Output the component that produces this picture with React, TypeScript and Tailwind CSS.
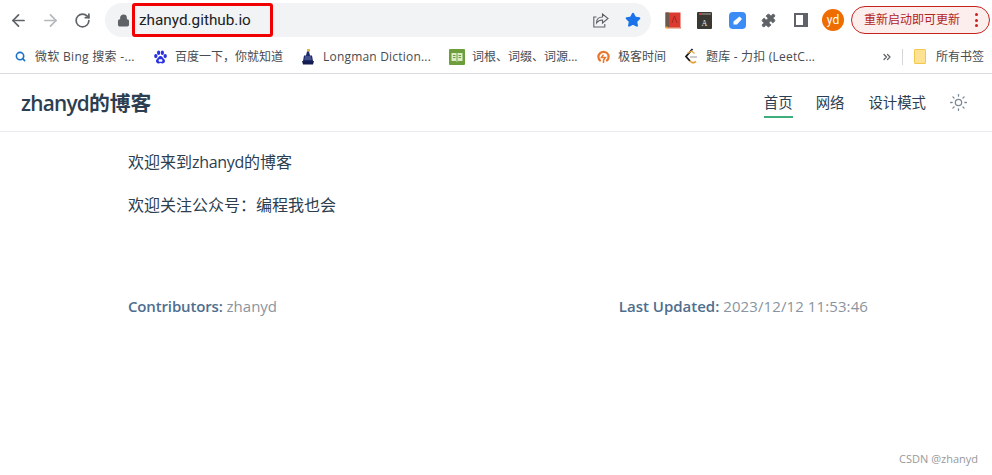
import { ArrowLeft, ArrowRight, RotateCw, Lock, Star, Puzzle, Search, Sun, ChevronsRight } from "lucide-react";

const sans = "font-['Open_Sans','Noto_Sans_CJK_SC',sans-serif]";

function BookmarkIcon({ name }: { name: string }) {
  if (name === "bing") return <Search className="w-[11px] h-[11px] text-[#1a73c8]" strokeWidth={3.5} />;
  if (name === "baidu")
    return (
      <svg width="15" height="16" viewBox="0 0 16 16" fill="#2932e1">
        <ellipse cx="3" cy="7" rx="1.8" ry="2.3" />
        <ellipse cx="6" cy="3.4" rx="1.7" ry="2.4" />
        <ellipse cx="10" cy="3.4" rx="1.7" ry="2.4" />
        <ellipse cx="13" cy="7" rx="1.8" ry="2.3" />
        <path d="M8 7c-2 0-2.500 2.200-4 3.500-1.500 1.500-.8 4.500 1.800 4.300 1-.1 1.500-.4 2.200-.4s1.300.4 2.300.4c2.500 0 3.200-2.800 1.700-4.300C10.500 9.200 10 7 8 7z" />
        <rect x="6" y="10.500" width="4" height="2.500" rx="1" fill="#fff" />
      </svg>
    );
  if (name === "longman")
    return (
      <svg width="16" height="16" viewBox="0 0 16 16">
        <path d="M7 0h3v2.500H7z" fill="#e4b93a" />
        <path d="M7 2.500h2l1 4h2l1 5.500H3l1-5.500h2z" fill="#1d2a6b" />
        <path d="M2 12h12l-1 3.500H3z" fill="#141d52" />
        <path d="M5 8h6M4.500 10h7" stroke="#8f97c4" strokeWidth="0.7" />
      </svg>
    );
  if (name === "book")
    return (
      <svg width="16" height="16" viewBox="0 0 16 16">
        <rect width="16" height="16" rx="1" fill="#6c9f3c" />
        <path d="M2.500 4h4.700l.8 1 .8-1h4.700v8H9l-1 1-1-1H2.500z" fill="#dcebc6" />
        <path d="M8 5v7.500M4 6.500h2.500M4 8.500h2.500M9.500 6.500H12M9.500 8.500H12" stroke="#6c9f3c" fill="none" />
      </svg>
    );
  if (name === "geek")
    return (
      <svg width="13" height="14" viewBox="0 0 14 14" fill="none">
        <path d="M4 11.500C2.500 10.500 1.500 9 1.500 7a5.500 5.500 0 0 1 11 0c0 2-1 3.500-2.500 4.500" stroke="#e8762c" strokeWidth="2.400" />
        <path d="M7 4.500 4.800 7.500H9L7 10.500v3" stroke="#e8762c" strokeWidth="1.600" />
      </svg>
    );
  return (
    <svg width="16" height="17" viewBox="0 0 16 17" fill="none">
      <path d="M9.500 1 3 8.500l4 4.500" stroke="#1a1a1a" strokeWidth="1.800" />
      <path d="M7 13c2 2.500 4 2 6 .5" stroke="#e8a33a" strokeWidth="1.800" />
      <path d="M4 5.500 8.500 3l3 2.500" stroke="#e8a33a" strokeWidth="1.300" />
      <path d="M7 9h7" stroke="#b5b5b5" strokeWidth="1.400" />
    </svg>
  );
}

const bookmarks = [
  { icon: "bing", label: "微软 Bing 搜索 -...", w: "w-[140px]", t: "tracking-[0.3px]" },
  { icon: "baidu", label: "百度一下，你就知道", w: "w-[148px]", t: "" },
  { icon: "longman", label: "Longman Diction...", w: "w-[149px]", t: "tracking-[0.2px]" },
  { icon: "book", label: "词根、词缀、词源...", w: "w-[146px]", t: "" },
  { icon: "geek", label: "极客时间", w: "w-[88px]", t: "" },
  { icon: "leet", label: "题库 - 力扣 (LeetC...", w: "w-[150px]", t: "tracking-[0.2px]" },
];

function Toolbar() {
  return (
    <div className="h-[40px] flex items-center pl-[9px] bg-white">
      <ArrowLeft className="w-[19px] h-[19px] text-[#5f6368]" strokeWidth={2.2} />
      <ArrowRight className="w-[19px] h-[19px] ml-[13px] text-[#b4b7bb]" strokeWidth={2.2} />
      <RotateCw className="w-[17px] h-[17px] ml-[14px] text-[#5f6368]" strokeWidth={2.4} />
      <div className="ml-[14px] w-[546px] h-[34px] rounded-full bg-[#f1f3f4] flex items-center pl-[12px] pr-[10px]">
        <Lock className="w-[13px] h-[13px] text-[#5f6368]" fill="#5f6368" strokeWidth={2.4} />
        <span className="ml-[9px] text-[15.3px] text-[#202124] font-['Roboto',sans-serif]">zhanyd.github.io</span>
        <svg className="ml-auto" width="16" height="15" viewBox="0 0 16 15" fill="none" stroke="#5f6368" strokeWidth="1.100">
          <path d="M3.500 4H.8v10h11v-3" />
          <path d="M9.500 1v3C6 4 3.500 6 3.500 10c1.500-2.300 3.300-3 6-3v3L15 5.500z" />
        </svg>
        <Star className="w-[16px] h-[16px] ml-[16px] text-[#1a73e8]" fill="#1a73e8" />
      </div>
      <svg className="ml-[14px]" width="16" height="17" viewBox="0 0 16 17">
        <rect x="0.500" y="0.500" width="15" height="15" fill="#dc3a30" />
        <rect x="0.500" y="0.500" width="3.500" height="15" fill="#6e5a4c" />
        <rect x="2" y="15" width="14" height="1.500" fill="#e07a60" />
        <rect x="0.500" y="14.500" width="2" height="2" fill="#e8b030" />
        <path d="M7 11 9.500 4l2.500 7" stroke="#a32820" fill="none" />
      </svg>
      <svg className="ml-[16px]" width="15" height="17" viewBox="0 0 15 17">
        <rect width="15" height="17" rx="1" fill="#3a3833" />
        <rect x="2" y="1" width="3" height="2" fill="#c5443a" />
        <rect x="5" y="1.500" width="9" height="1" fill="#a8a59c" />
        <text x="7.500" y="13.500" fontSize="8" fill="#e8e6df" textAnchor="middle" fontFamily="Liberation Serif">A</text>
      </svg>
      <div className="ml-[17px] w-[17px] h-[17px] rounded-[4px] bg-[#3b8cf5] flex items-center justify-center">
        <svg width="11" height="11" viewBox="0 0 11 11" fill="#fff">
          <path d="M7.500 1.500 10 4l-5 5.500H1.500V6.500z" />
        </svg>
      </div>
      <Puzzle className="ml-[15px] w-[15px] h-[15px] text-[#5f6368]" fill="#5f6368" strokeWidth={1.5} />
      <div className="ml-[18px] w-[14px] h-[14px] border-[2px] border-[#5f6368] border-r-[5px]" />
      <div className="ml-[14px] w-[22px] h-[22px] rounded-full bg-[#ee6c00] flex items-center justify-center text-white text-[12px] font-['Roboto',sans-serif]">yd</div>
      <div className="ml-[7px] w-[139px] h-[28px] rounded-full border border-[#c5221f] bg-[#fbeeed] flex items-center pl-[12px] pr-[11px]">
        <span className={`text-[12px] text-[#b3261e] ${sans}`}>重新启动即可更新</span>
        <div className="ml-auto flex flex-col gap-[2.500px]">
          <div className="w-[3px] h-[3px] rounded-full bg-[#c5221f]" />
          <div className="w-[3px] h-[3px] rounded-full bg-[#c5221f]" />
          <div className="w-[3px] h-[3px] rounded-full bg-[#c5221f]" />
        </div>
      </div>
    </div>
  );
}

function BookmarkBar() {
  return (
    <div className={`h-[34px] flex items-center pl-[12px] border-b border-[#dadce0] text-[12px] text-[#484b4f] ${sans}`}>
      {bookmarks.map((b) => (
        <div key={b.label} className={`${b.w} flex items-center shrink-0`}>
          <div className="w-[16px] flex justify-center shrink-0">
            <BookmarkIcon name={b.icon} />
          </div>
          <span className={`ml-[7px] whitespace-nowrap ${b.t}`}>{b.label}</span>
        </div>
      ))}
      <ChevronsRight className="ml-[48px] w-[12px] h-[12px] text-[#5f6368]" strokeWidth={2.5} />
      <div className="ml-[9px] w-px h-[16px] bg-[#d5d7da]" />
      <div className="ml-[11px] w-[12px] h-[15px] rounded-[1px] bg-[#fde293] border border-[#f2c94c]" />
      <span className="ml-[10px] whitespace-nowrap">所有书签</span>
    </div>
  );
}

export default function App() {
  return (
    <div className={`relative w-[992px] h-[475px] overflow-hidden bg-white ${sans}`}>
      <Toolbar />
      <BookmarkBar />

      {/* Highlight drawn over the address bar */}
      <div className="absolute left-[132px] top-[3px] w-[141px] h-[34px] border-[3px] border-[#f00000] rounded-[3px]" />

      {/* Site header */}
      <header className="h-[58px] flex items-center pl-[21px] pr-[24px] border-b border-[#eaecef]">
        <span className="text-[20.8px] font-bold text-[#2c3e50] mt-[2px]">
          <span className="font-semibold tracking-[-0.75px]">zhanyd</span>的博客
        </span>
        <nav className="ml-auto flex items-center text-[14.4px] text-[#2c3e50] mt-[1px]">
          <span className="relative">
            首页
            <span className="absolute left-0 right-0 bottom-[-4px] h-[2px] bg-[#3eaf7c]" />
          </span>
          <span className="ml-[23px]">网络</span>
          <span className="ml-[24px]">设计模式</span>
          <Sun className="ml-[23px] w-[19px] h-[19px] text-[#7a8794]" strokeWidth={1.6} />
        </nav>
      </header>

      <main className="w-[740px] ml-[128px] pt-[19px] text-[16px] text-[#2c3e50]">
        <p className="leading-[22px]">
          欢迎来到<span className="tracking-[-0.3px]">zhanyd</span>的博客
        </p>
        <p className="mt-[21px] leading-[22px]">欢迎关注公众号：编程我也会</p>
        <div className="mt-[78px] flex justify-between text-[15px] leading-[24px] text-[#8a949e]">
          <div>
            <span className="font-semibold text-[#4e6e8e] tracking-[-0.15px]">Contributors:</span> zhanyd
          </div>
          <div>
            <span className="font-semibold text-[#4e6e8e]">Last Updated:</span>{" "}
            <span className="tracking-[0.1px]">2023/12/12 11:53:46</span>
          </div>
        </div>
      </main>

      <div className="absolute right-[14px] bottom-[8px] text-[11px] text-[#999999]">CSDN @zhanyd</div>
    </div>
  );
}
